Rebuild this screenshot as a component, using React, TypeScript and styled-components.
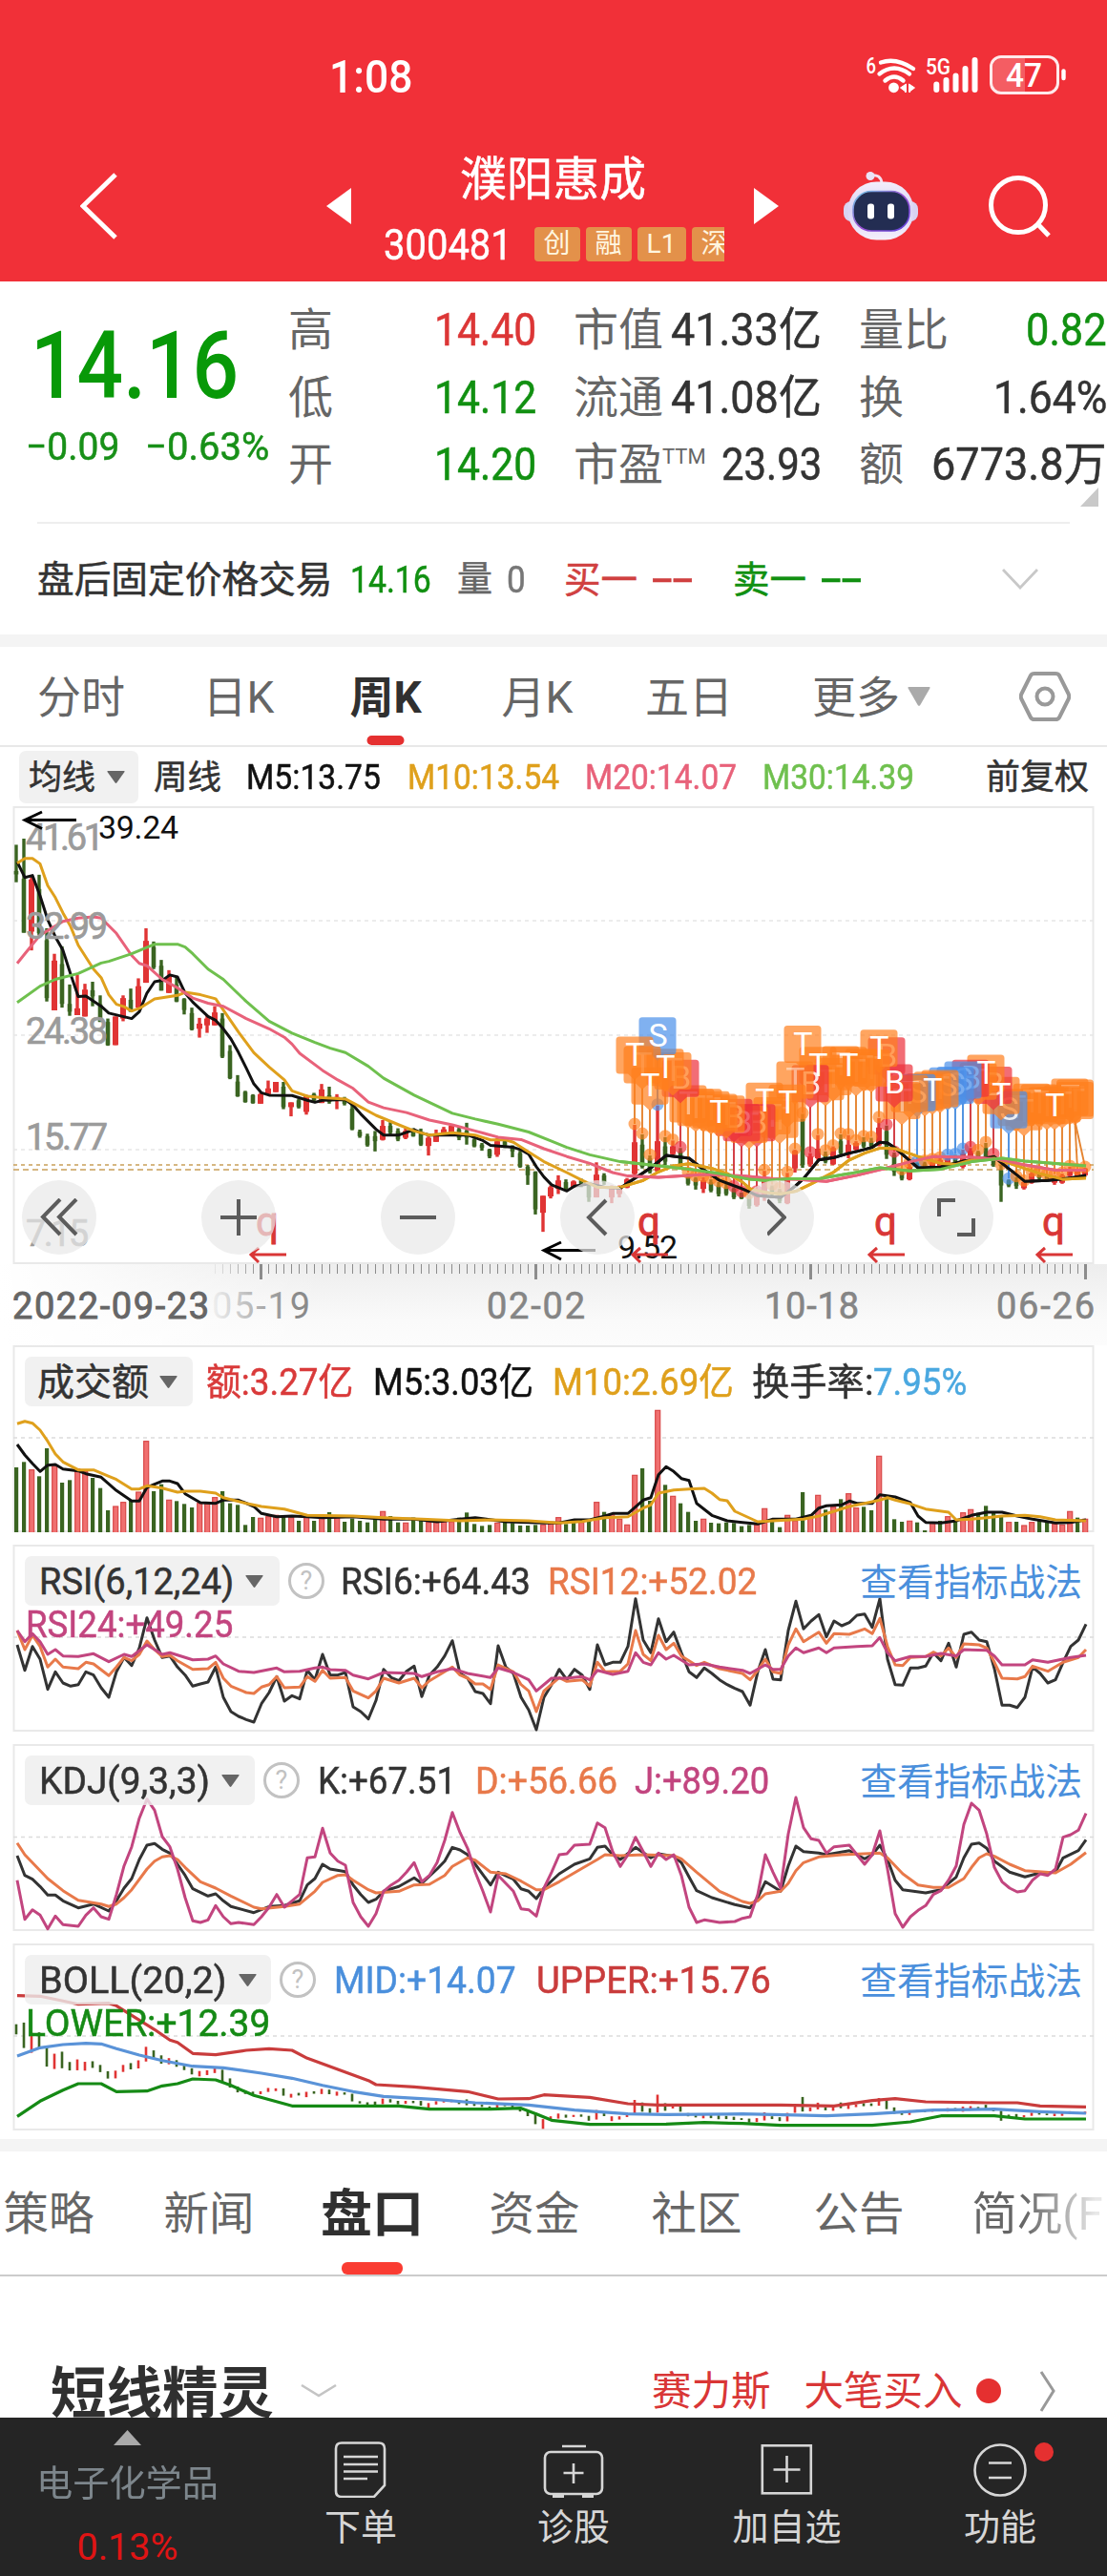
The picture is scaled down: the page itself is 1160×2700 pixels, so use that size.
import { useLayoutEffect, useRef } from "react";
import type { ReactNode } from "react";
import styled, { createGlobalStyle, css } from "styled-components";

const FONT = `Roboto, "Noto Sans CJK SC", sans-serif`;

const GlobalStyle = createGlobalStyle`
  * { box-sizing: border-box; }
  body {
    margin: 0;
    background: #fff;
    font-family: ${FONT};
  }
  svg { display: block; flex: none; }
`;

/* ---------- text ---------- */

const FitBox = styled.span<{ w: number; size: number; gap?: number; color?: string; weight?: number; shift?: number }>`
  display: block;
  flex: none;
  width: ${(p) => p.w}px;
  margin-left: ${(p) => p.gap || 0}px;
  padding-top: ${(p) => p.shift || 0}px;
  font-size: ${(p) => p.size}px;
  line-height: 1.1;
  font-weight: ${(p) => p.weight || 400};
  color: ${(p) => p.color || "#333"};
  -webkit-text-stroke: ${(p) => (p.weight ? 0 : 0.5)}px currentColor;
  white-space: nowrap;
`;

const FitInner = styled.span`
  display: inline-block;
  transform-origin: 0 50%;
  white-space: pre;
`;

type FitProps = {
  w: number;
  size: number;
  gap?: number;
  color?: string;
  weight?: number;
  shift?: number;
  children: ReactNode;
};

// squeezes a label to the given width, the quote digits are narrower than the system ones
const Fit = ({ children, ...rest }: FitProps) => {
  const ref = useRef<HTMLSpanElement>(null);

  useLayoutEffect(() => {
    const el = ref.current;
    if (!el || !el.offsetWidth) return;
    el.style.transform = `scaleX(${rest.w / el.offsetWidth})`;
  }, [rest.w, children]);

  return (
    <FitBox {...rest}>
      <FitInner ref={ref}>{children}</FitInner>
    </FitBox>
  );
};

/* ---------- layout ---------- */

const Page = styled.div`
  width: 1160px;
  height: 2700px;
  overflow: hidden;
  display: flex;
  flex-direction: column;
  background: #fff;
`;

const Header = styled.header`
  height: 295px;
  flex: none;
  background: #f13038;
`;

const StatusBar = styled.div`
  height: 158px;
  display: flex;
  align-items: center;
  padding-left: 345px;
`;

const NavBar = styled.div`
  height: 116px;
  display: flex;
  align-items: center;
  padding-left: 84px;
`;

const Icon = styled.svg<{ gap?: number }>`
  margin-left: ${(p) => p.gap || 0}px;
`;

const TitleBlock = styled.div`
  width: 422px;
  height: 116px;
  display: flex;
  flex-direction: column;
  align-items: center;
  justify-content: space-between;
`;

const CodeRow = styled.div`
  width: 357px;
  height: 36px;
  margin-left: 2px;
  overflow: hidden;
  display: flex;
  align-items: center;
`;

const Tag = styled.span<{ w: number; gap?: number }>`
  flex: none;
  width: ${(p) => p.w}px;
  height: 36px;
  margin-left: ${(p) => p.gap ?? 6}px;
  border-radius: 4px;
  background: #e3914a;
  color: #fff6e0;
  font-size: 28px;
  line-height: 35px;
  text-align: center;
`;

const Quote = styled.section`
  position: relative;
  height: 252px;
  flex: none;
  display: flex;
  padding-top: 16px;
`;

const PriceBlock = styled.div`
  width: 302px;
  padding: 19px 0 0 27px;
`;

const Changes = styled.div`
  display: flex;
  margin-top: 8px;
`;

const QuoteCol = styled.div<{ w: number; gap?: number }>`
  width: ${(p) => p.w}px;
  margin-left: ${(p) => p.gap || 0}px;
`;

const QuoteRow = styled.div`
  height: 70.5px;
  display: flex;
  align-items: center;
  justify-content: space-between;
`;

const Label = styled.span`
  display: flex;
  color: #666;
  font-size: 47px;
  line-height: 1.1;
`;

const Ttm = styled.sup`
  font-size: 22px;
  line-height: 1;
  margin: 7px 0 0 -1px;
  vertical-align: top;
`;

const Corner = styled.svg`
  position: absolute;
  right: 9px;
  bottom: 16px;
`;

const AfterRow = styled.section`
  height: 118px;
  flex: none;
  margin: 0 39px;
  border-top: 2px solid #eee;
  display: flex;
  align-items: center;
`;

const Band = styled.div`
  height: 13px;
  flex: none;
  background: #f4f4f4;
`;

const PeriodTabs = styled.nav`
  height: 105px;
  flex: none;
  display: flex;
  align-items: center;
  border-bottom: 2px solid #e8e8e8;
`;

const Tab = styled.span<{ w: number; gap: number; size?: number; active?: boolean; barColor?: string }>`
  position: relative;
  flex: none;
  width: ${(p) => p.w}px;
  height: 100%;
  margin-left: ${(p) => p.gap}px;
  padding-bottom: 6px;
  display: flex;
  align-items: center;
  justify-content: center;
  font-size: ${(p) => p.size || 46}px;
  color: #666;
  white-space: nowrap;

  ${(p) =>
    p.active &&
    css`
      color: #303030;
      font-weight: 700;

      &::after {
        content: "";
        position: absolute;
        bottom: 0;
        left: 50%;
        width: ${p.size ? 64 : 39}px;
        height: ${p.size ? 13 : 10}px;
        border-radius: 6px;
        transform: translateX(-50%);
        background: ${p.barColor || "#e53030"};
      }
    `}
`;

const MaLegend = styled.div`
  height: 62px;
  flex: none;
  display: flex;
  align-items: center;
  padding-left: 20px;
`;

const Chip = styled.div<{ w: number; h?: number; pad: number }>`
  flex: none;
  width: ${(p) => p.w}px;
  height: ${(p) => p.h || 52}px;
  padding-left: ${(p) => p.pad}px;
  border-radius: 7px;
  background: rgba(238, 238, 238, 0.8);
  display: flex;
  align-items: center;
`;

const Panel = styled.section<{ h: number; mb?: number }>`
  height: ${(p) => p.h}px;
  margin-bottom: ${(p) => p.mb || 0}px;
  flex: none;
  display: grid;
  grid-template: ${(p) => p.h}px / 1160px;

  > * {
    grid-area: 1 / 1;
  }
`;

const LegendBlock = styled.div`
  padding: 12px 26px 0 26px;
`;

const LegendRow = styled.div`
  height: 52px;
  display: flex;
  align-items: center;
`;

const TacticLink = styled.a`
  margin-left: auto;
  padding-top: 5px;
  font-size: 38.8px;
  line-height: 1;
  color: #4a8fdc;
`;

const Help = styled.span`
  flex: none;
  width: 38px;
  height: 38px;
  margin-left: 9px;
  border: 3px solid #c2c2c2;
  border-radius: 50%;
  color: #c2c2c2;
  font-size: 27px;
  line-height: 33px;
  text-align: center;
`;

const Controls = styled.div`
  align-self: end;
  height: 88px;
  display: flex;
  gap: 110px;
  padding-left: 23px;
`;

const RoundButton = styled.button`
  width: 78px;
  height: 78px;
  padding: 0;
  border: none;
  border-radius: 50%;
  background: rgba(233, 233, 233, 0.72);
  display: flex;
  align-items: center;
  justify-content: center;
`;

const DateAxis = styled.div`
  height: 85px;
  flex: none;
  background: linear-gradient(90deg, #fff 0, transparent 340px), linear-gradient(#ededed, #fafafa 70%, #fcfcfc);
`;

const InfoTabs = styled.nav`
  height: 131px;
  flex: none;
  display: flex;
  align-items: stretch;
  overflow: hidden;
  border-bottom: 2px solid #ccc;
`;

const FadeText = styled.span`
  background: linear-gradient(90deg, #666 55px, #e8e8e8 130px);
  background-clip: text;
  color: transparent;
`;

const Feed = styled.section`
  height: 148px;
  flex: none;
  display: flex;
  padding: 91px 0 0 53px;
  overflow: hidden;
`;

const FeedTitle = styled.h2`
  margin: 0;
  height: 57px;
  font-size: 58.5px;
  line-height: 64px;
  font-weight: 700;
  color: #303030;
  width: 234px;
`;

const FeedText = styled.span<{ gap: number }>`
  margin-left: ${(p) => p.gap}px;
  font-size: 41.5px;
  line-height: 60px;
  color: #d93636;
`;

const Dot = styled.i<{ size: number; gap: number; top: number }>`
  width: ${(p) => p.size}px;
  height: ${(p) => p.size}px;
  margin: ${(p) => p.top}px 0 0 ${(p) => p.gap}px;
  border-radius: 50%;
  background: #e53030;
`;

const BottomBar = styled.footer`
  height: 166px;
  flex: none;
  background: #252525;
  display: flex;
`;

const Sector = styled.div`
  width: 267px;
  padding-top: 13px;
  display: flex;
  flex-direction: column;
  align-items: center;
`;

const BarItem = styled.div<{ w: number }>`
  position: relative;
  width: ${(p) => p.w}px;
  padding-top: 22px;
  display: flex;
  flex-direction: column;
  align-items: center;
  gap: 6px;
  font-size: 38px;
  line-height: 50px;
  color: #d6d6d6;
`;

const Badge = styled.i`
  position: absolute;
  top: 26px;
  right: 56px;
  width: 20px;
  height: 20px;
  border-radius: 50%;
  background: #e53030;
`;

/* ---------- chart data ---------- */

// one entry per week: colour, high, open/close band, low
const CANDLES =
  "G130,207,217,240 G112,230,388,388 R222,232,385,440 G218,260,390,395 G375,410,580,590 R450,470,616,616 G428,480,597,608 " +
  "G540,597,620,632 R512,610,630,630 R538,555,634,634 G532,557,575,604 G572,598,650,650 G640,650,718,720 R634,634,718,718 " +
  "R572,580,640,648 G552,585,620,620 R522,545,608,610 R375,412,535,535 G414,430,490,495 G468,485,558,558 R498,515,565,565 " +
  "G520,540,590,592 G580,583,615,628 G608,624,672,675 R638,655,670,696 R630,640,660,682 R604,622,660,660 G624,640,752,756 " +
  "G718,735,815,818 G806,825,868,870 G852,855,885,887 G862,865,888,890 R858,862,890,890 R822,845,862,865 R826,826,856,856 " +
  "G826,840,900,906 R886,886,900,927 G875,880,900,904 R864,865,914,922 G858,862,880,885 R832,848,888,888 G840,865,885,890 " +
  "R862,870,880,906 G870,875,890,895 G885,905,965,968 G966,972,985,990 G978,985,1012,1016 G970,985,1000,1030 R938,955,996,998 " +
  "G944,955,975,980 G962,970,995,1000 R962,970,990,994 G962,965,985,987 G963,975,1010,1014 R986,990,1014,1042 R966,980,1002,1002 " +
  "R958,965,978,980 R950,955,974,976 G958,965,990,997 G946,970,990,1010 G992,995,1015,1018 G1005,1010,1020,1028 G1022,1025,1045,1050 " +
  "R990,1000,1040,1046 G994,1000,1018,1020 G1012,1015,1030,1047 G1028,1035,1075,1078 G1070,1075,1100,1128 G1088,1090,1200,1215 " +
  "R1160,1160,1210,1266 R1130,1135,1162,1168 R1100,1115,1140,1155 G1112,1120,1140,1145 R1115,1118,1135,1137 G1110,1115,1130,1135 " +
  "G1125,1130,1165,1178 R1062,1098,1165,1165 G1094,1100,1120,1128 R1130,1135,1165,1182 R1130,1135,1155,1165 R1108,1112,1136,1138 " +
  "R952,1003,1096,1100 G980,1010,1075,1080 G1042,1050,1090,1095 R895,1000,1088,1090 G988,1015,1060,1070 R998,1015,1038,1045 " +
  "G1020,1030,1075,1080 G1095,1100,1125,1130 G1105,1110,1130,1142 R1105,1115,1140,1152 G1112,1120,1145,1150 G1120,1130,1155,1162 " +
  "G1125,1135,1155,1160 G1135,1140,1165,1170 G1150,1152,1168,1170 G1155,1160,1190,1198 R1150,1155,1188,1192 R1087,1110,1160,1175 " +
  "G1130,1135,1155,1160 G1140,1145,1175,1182 R1093,1110,1182,1185 R1025,1028,1080,1092 G920,935,1070,1078 R1035,1045,1068,1075 " +
  "R982,1022,1050,1055 G1030,1038,1060,1065 R1015,1020,1068,1070 G980,1000,1035,1042 R982,1010,1040,1050 R1000,1005,1025,1030 " +
  "G988,1000,1015,1020 G990,1000,1015,1018 R932,960,1012,1015 G954,970,1040,1052 G1033,1040,1090,1102 G1085,1090,1110,1115 " +
  "R1065,1075,1112,1115 G1062,1065,1075,1078 G1060,1065,1078,1085 R1055,1060,1078,1080 R1050,1055,1072,1075 R1042,1050,1075,1078 " +
  "G1040,1045,1070,1075 R1025,1035,1075,1080 R1020,1028,1050,1055 G1028,1032,1050,1055 G1005,1020,1050,1055 G1040,1048,1070,1075 " +
  "G1070,1085,1130,1178 G1112,1115,1130,1135 G1105,1115,1132,1140 R1118,1120,1138,1142 R1090,1095,1122,1125 G1092,1095,1108,1112 " +
  "G1100,1102,1115,1118 R1100,1105,1122,1128 R1095,1100,1122,1125 R1075,1085,1102,1105 R1085,1088,1102,1105 R1078,1080,1100,1102";

const VOLUMES =
  "417G 400G 425R 445G 357G 410R 465G 457G 422R 430R 450G 482G 552G 540R 527R 520G 495R 335R 492G 470G 520R 523G 532G 543G 530R 528R 512R " +
  "492G 530G 535G 598G 573G 577R 572R 568R 572G 575R 585G 572R 585G 572R 558G 575R 588G 578G 585G 590G 575G 556R 570G 590G 592R 575G 585G " +
  "590R 585R 588R 588R 575G 559G 595G 601G 598G 592R 585G 592G 600G 600G 598G 598R 590R 575R 595G 585G 590R 580G 527R 557G 565R 580R 598R " +
  "442R 420G 522G 238R 472G 508R 530G 557G 585G 580R 591G 593G 590G 592G 602G 598G 598R 547R 585G 605G 568R 585R 495G 570R 505R 550G 542R " +
  "517G 500R 545R 541G 552G 382R 505G 580G 588G 586R 590G 615G 590R 585G 572R 585G 560R 550R 560G 538G 558G 572G 590R 588G 600R 590R 585G " +
  "590G 595R 598R 556R 575G 580R";

type Line = [string, string];

const PRICE_LINES: Line[] = [
  ["#111", "0:180 1:226 2:220 3:280 4:350 5:400 6:440 7:510 8:575 9:574 11:604 12:624 15:640 16:620 17:565 18:532 19:528 20:512 21:518 22:565 23:592 25:634 26:645 27:670 28:700 29:740 30:785 31:832 32:858 33:865 36:866 38:880 39:886 40:880 43:878 44:895 45:920 47:965 48:982 50:982 52:966 53:976 54:982 57:982 59:982 61:998 62:1012 65:1018 66:1025 67:1038 68:1075 69:1105 70:1128 72:1146 73:1132 75:1125 77:1135 79:1138 80:1122 83:1078 85:1042 88:1050 90:1085 92:1115 95:1140 96:1150 97:1160 100:1165 102:1130 103:1110 105:1055 107:1048 109:1035 110:1030 112:1018 113:1003 114:1005 115:1020 118:1078 121:1076 124:1058 128:1046 129:1065 131:1100 132:1118 135:1115 138:1108 140:1100"],
  ["#dfa01c", "0:184 1:170 2:170 3:186 4:250 5:285 6:330 7:370 8:425 10:495 11:520 12:570 13:598 14:605 15:618 16:610 18:582 21:572 22:563 24:570 26:582 27:615 29:680 31:740 33:782 35:820 36:852 38:868 40:872 43:876 45:900 47:924 50:952 52:970 54:982 57:975 60:982 62:996 64:996 65:1003 67:1032 69:1060 72:1092 74:1115 76:1135 79:1135 82:1115 84:1090 86:1072 88:1066 91:1080 93:1095 95:1120 96:1140 98:1150 100:1155 102:1147 104:1125 107:1090 109:1055 111:1035 113:1020 115:1022 118:1045 121:1065 123:1068 125:1055 128:1050 130:1065 134:1095 137:1112 140:1108"],
  ["#e8627a", "0:478 1:450 3:395 6:355 8:345 10:342 11:345 13:390 15:455 16:478 17:485 19:525 21:550 23:580 25:595 27:604 30:640 33:670 35:695 36:715 37:742 40:792 42:820 44:845 46:885 48:902 51:916 54:938 57:952 60:970 63:988 66:995 69:1022 72:1045 75:1065 78:1092 80:1102 84:1106 90:1098 95:1102 99:1110 102:1112 106:1118 110:1100 114:1078 117:1060 120:1045 126:1048 129:1055 132:1070 136:1085 140:1085"],
  ["#6fc04e", "0:593 3:545 5:525 8:508 11:477 12:472 15:450 18:422 21:422 22:430 23:450 25:495 27:525 30:590 33:648 36:683 39:710 41:727 43:740 46:780 48:815 52:865 57:918 60:935 63:950 67:973 70:1000 72:1018 75:1040 79:1060 83:1070 88:1082 92:1095 96:1112 98:1115 101:1110 105:1110 109:1095 113:1078 117:1087 121:1082 125:1060 129:1050 132:1058 136:1065 140:1072"],
];

const VOLUME_LINES: Line[] = [
  ["#111", "0:345 1:378 2:405 3:430 4:410 5:408 6:422 8:428 9:437 11:448 13:490 15:523 16:523 17:480 18:470 19:460 20:460 21:468 22:500 24:528 26:530 27:520 29:520 31:540 32:562 34:572 36:570 38:572 40:575 44:572 48:580 52:580 55:588 58:580 60:575 64:588 69:592 71:592 73:582 75:582 77:570 78:562 80:562 82:520 83:512 84:440 85:415 86:430 87:452 88:458 89:530 91:568 93:585 95:590 97:595 99:580 102:580 104:568 105:545 106:538 108:535 109:523 110:530 112:530 113:503 115:510 117:528 118:570 119:590 121:592 123:585 125:568 127:558 129:558 131:570 133:580 136:592 138:590 140:582"],
  ["#dfa01c", "0:280 1:272 2:278 3:300 4:335 5:375 6:400 8:425 10:425 12:445 13:455 15:485 16:485 17:475 19:482 21:495 22:492 24:492 26:498 27:512 30:530 32:540 35:548 38:568 44:570 48:575 53:580 58:585 62:582 67:585 71:592 74:587 77:575 80:572 82:545 83:535 84:498 86:488 88:485 90:483 91:498 92:518 93:522 94:555 97:588 99:585 103:580 105:570 107:555 109:540 111:530 113:520 114:512 115:520 117:532 119:548 122:558 123:582 125:580 127:575 129:570 132:568 134:572 136:582 140:585"],
];

const RSI_LINES: Line[] = [
  ["#333", "0:975 1:1055 2:980 3:1020 4:1115 5:1060 6:1095 7:1105 8:1100 9:1060 10:1070 11:1110 12:1140 13:1060 14:1015 15:1040 16:985 17:890 18:960 19:1015 20:1010 21:1045 22:1070 23:1105 24:1098 25:1092 26:1045 27:1140 28:1185 29:1200 30:1210 31:1218 32:1160 33:1125 34:1075 35:1152 36:1135 37:1145 38:1055 39:1085 40:1005 41:1070 42:1070 43:1062 44:1170 45:1185 46:1208 47:1150 48:1052 49:1078 50:1088 51:1058 52:1042 53:1138 54:1070 55:1045 56:1010 57:962 58:1065 59:1080 60:1122 61:1128 62:1160 63:978 64:1045 65:1065 66:1140 67:1180 68:1242 69:1140 70:1100 71:1052 72:1085 73:1052 74:1070 75:1115 76:975 77:1038 78:1030 79:1030 80:980 81:830 82:960 83:1000 84:893 85:965 86:935 87:1000 88:1060 89:1078 90:1048 91:1065 92:1085 93:1100 94:1112 95:1122 96:1165 97:1060 98:990 99:1083 100:1085 101:930 102:838 103:925 104:900 105:880 106:950 107:900 108:915 109:905 110:882 111:878 112:920 113:830 114:1020 115:1100 116:1102 117:1048 118:1048 119:1042 120:1000 121:1025 122:970 123:1045 124:942 125:935 126:960 127:965 128:1050 129:1165 130:1165 131:1172 132:1140 133:1045 134:1065 135:1095 136:1085 137:1030 138:980 139:960 140:910"],
  ["#e8794a", "0:930 1:990 2:945 3:980 4:1045 5:1020 6:1045 8:1050 9:1030 10:1035 12:1072 13:1045 14:1015 15:1025 16:1005 17:963 18:990 19:1012 20:1008 21:1025 23:1052 25:1050 26:1030 27:1080 28:1105 30:1125 31:1128 32:1108 33:1100 34:1075 35:1110 37:1108 38:1075 39:1090 40:1055 41:1080 43:1078 44:1120 46:1142 47:1120 48:1080 50:1095 52:1080 53:1110 54:1088 57:1045 58:1070 59:1080 60:1098 61:1098 62:1115 63:1038 65:1060 66:1100 67:1120 68:1185 69:1120 71:1078 72:1090 74:1085 75:1105 76:1030 77:1060 79:1058 80:1035 81:930 82:1005 83:1025 84:945 85:990 86:970 87:1010 89:1040 90:1030 92:1050 95:1065 96:1085 97:1055 98:1020 99:1060 100:1065 101:975 102:925 103:965 105:935 106:970 107:940 109:942 111:925 112:940 113:892 114:980 115:1038 116:1040 117:1015 119:1012 120:998 121:1010 122:985 123:1015 124:972 126:975 127:985 128:1030 129:1080 131:1082 132:1075 133:1042 135:1058 137:1030 139:1015 140:990"],
  ["#c2457f", "0:930 1:965 2:940 3:965 4:1005 5:990 6:1010 8:1012 10:1003 12:1028 14:1005 15:1012 17:975 19:1005 20:1000 23:1022 25:1020 26:1010 27:1035 29:1058 31:1062 34:1048 35:1060 37:1058 39:1048 40:1045 41:1053 43:1055 44:1070 46:1082 48:1062 52:1065 53:1075 55:1060 57:1050 59:1065 62:1078 63:1048 65:1062 67:1085 68:1120 70:1080 72:1080 74:1075 75:1085 76:1055 78:1068 80:1058 81:1000 82:1030 83:1038 84:1000 85:1020 86:1008 88:1038 90:1035 92:1045 95:1055 96:1065 98:1038 99:1052 100:1052 101:1010 102:985 103:1000 105:985 106:1000 107:985 110:980 112:978 113:952 114:1000 115:1025 117:1012 119:1012 121:1002 123:1010 124:990 127:992 128:1010 129:1038 132:1038 133:1022 135:1030 138:1015 140:1008"],
];

const KDJ_LINES: Line[] = [
  ["#333", "0:378 1:440 2:452 3:475 4:502 5:502 6:520 8:542 10:530 12:552 13:520 14:480 15:450 16:390 17:345 18:340 19:358 20:370 21:405 22:440 23:482 25:505 26:498 27:520 28:538 31:557 33:538 35:535 37:520 38:470 39:450 40:405 41:420 43:428 44:470 45:500 46:525 47:515 48:490 50:475 52:448 53:465 55:420 56:395 57:352 58:360 59:375 60:405 62:470 63:430 65:452 66:482 67:490 68:513 69:480 71:435 73:405 75:388 76:352 77:348 78:375 79:390 81:352 83:385 84:372 86:380 87:400 88:445 89:488 91:510 94:532 96:542 97:510 98:460 100:490 101:410 102:348 103:365 105:370 106:375 109:362 111:388 112:375 113:345 114:390 115:455 116:485 119:495 121:485 123:445 124:385 125:342 126:338 127:355 128:395 130:430 132:445 134:432 136:430 137:385 139:362 140:328"],
  ["#e8794a", "0:338 1:375 4:450 6:488 8:518 11:530 12:538 13:530 14:510 15:485 17:420 18:395 19:382 20:378 21:390 22:415 24:460 26:480 28:505 31:540 32:545 35:538 37:530 39:490 40:462 42:440 43:438 44:455 46:485 47:495 50:490 52:470 54:468 56:440 57:412 59:385 60:392 62:430 64:435 66:458 68:485 69:485 71:460 74:418 76:390 77:375 79:378 82:375 86:378 87:388 89:430 92:490 95:522 96:528 97:520 98:498 100:490 101:465 102:425 103:400 105:382 108:375 113:370 114:385 116:435 118:470 120:478 122:478 124:450 125:415 126:385 127:372 128:380 130:405 132:425 136:432 138:405 140:368"],
  ["#c2457f", "0:455 1:578 2:548 3:565 4:608 5:568 6:595 8:600 9:565 10:542 11:570 12:578 13:500 14:410 15:350 16:260 17:200 18:235 19:318 20:350 21:420 22:510 23:583 24:588 25:580 26:535 27:570 28:592 29:588 31:595 32:570 33:540 34:500 35:540 36:520 37:500 38:385 39:382 40:292 41:370 42:395 43:408 44:525 45:570 46:600 47:560 48:490 49:470 50:455 51:430 52:400 53:460 54:440 55:400 56:330 57:242 58:305 59:355 60:430 61:490 62:555 63:440 64:465 65:490 66:545 67:548 68:568 69:480 70:430 71:375 72:372 73:345 75:342 76:275 77:290 78:365 79:412 80:375 81:320 82:365 83:412 84:370 85:390 86:375 87:440 88:540 89:588 90:580 92:588 94:585 95:575 96:570 97:500 98:375 99:430 100:480 101:310 102:195 103:290 104:325 105:330 106:370 107:350 109:345 110:375 111:405 112:375 113:300 114:420 115:560 116:603 117:570 118:550 119:535 120:500 121:488 122:455 123:410 124:280 125:213 126:235 127:310 128:415 129:460 130:480 131:492 132:488 133:455 134:435 135:440 136:420 137:320 138:312 139:298 140:245"],
];

const BOLL_LINES: Line[] = [
  ["#c93c3c", "0:818 3:820 6:835 8:845 12:842 13:850 14:865 16:895 18:925 20:958 21:965 23:1000 26:1004 30:990 33:985 36:990 38:1015 42:1050 46:1085 47:1098 52:1105 59:1120 63:1143 67:1142 69:1130 75:1138 80:1158 84:1162 100:1162 107:1165 112:1148 115:1142 119:1152 127:1155 131:1155 134:1165 140:1168"],
  ["#5a93d8", "0:1008 3:982 6:972 9:968 11:970 13:985 16:1005 19:1022 23:1040 27:1045 32:1062 36:1078 40:1100 44:1120 48:1135 55:1145 60:1155 67:1162 73:1178 80:1190 85:1192 95:1190 106:1196 112:1190 120:1178 128:1175 134:1183 140:1188"],
  ["#158a15", "0:1198 3:1150 6:1115 8:1095 11:1095 13:1120 17:1118 19:1102 21:1095 23:1080 26:1083 28:1100 31:1132 36:1165 42:1165 50:1165 54:1175 62:1175 66:1172 68:1190 70:1210 75:1223 85:1222 90:1217 95:1220 100:1226 112:1226 117:1215 121:1196 128:1196 132:1206 140:1206"],
];

const candles = CANDLES.split(" ").map((c) => {
  const [high, top, bottom, low] = c.slice(1).split(",").map(Number);
  return { up: c[0] === "R", high, top, bottom, low };
});

const UP = "#e03434";
const DOWN = "#3a6421";

const xAt = (i: number) => 17 + i * 8;
const priceY = (v: number) => 840 + v / 2.8;
const bollY = (v: number) => 2133.3 + (v - 240) * 0.0965;

const toPoints = (series: string, y: (v: number) => number) =>
  series
    .split(" ")
    .map((p) => p.split(":").map(Number))
    .map(([i, v]) => `${xAt(i) + 1},${y(v).toFixed(1)}`)
    .join(" ");

const Lines = ({ lines, y, width = 3 }: { lines: Line[]; y: (v: number) => number; width?: number }) => (
  <>
    {lines.map(([color, series]) => (
      <polyline key={color} points={toPoints(series, y)} fill="none" stroke={color} strokeWidth={width} strokeLinejoin="round" />
    ))}
  </>
);

const Frame = ({ top, bottom }: { top: number; bottom: number }) => (
  <rect x="14.5" y={top} width="1131" height={bottom - top} fill="none" stroke="#e9e9e9" strokeWidth="2" />
);

const Grid = ({ y, color = "#e6e6e6", dash = "4 4" }: { y: number; color?: string; dash?: string }) => (
  <line x1="14" x2="1146" y1={y} y2={y} stroke={color} strokeWidth="1.6" strokeDasharray={dash} />
);

/* ---------- trade markers ---------- */

const SELLS = [84, 118, 122, 123, 124, 130];
const BUYS = [87, 94, 95, 97, 104, 114, 115, 125, 128];
const ON_TOP = [81, 83, 84, 85, 92, 98, 101, 103, 105, 109, 113, 115, 120, 127, 129, 136];

const markers = candles
  .map((c, i) => {
    const kind = SELLS.includes(i) ? "S" : BUYS.includes(i) ? "B" : "T";
    const y = priceY(c.high) - 1;
    return { i, kind, dotX: xAt(i), x: Math.min(xAt(i), 1126.5), y, top: y - 91.5 };
  })
  .slice(81);

const MARK_FILL: Record<string, string> = { T: "#ff7f1c", B: "#ec2f3b", S: "#4a90ea" };
const MARK_LINE: Record<string, string> = { T: "#e58430", B: "#d2383f", S: "#4a8fe0" };

const Glyph = ({ m, opacity }: { m: (typeof markers)[number]; opacity: number }) => (
  <text x={m.x + 0.5} y={m.top + 30.5} fontSize="34" fontFamily="Roboto" fill="#fff" opacity={opacity} textAnchor="middle">
    {m.kind}
  </text>
);

const Markers = () => (
  <g>
    {markers.map((m) => (
      <g key={m.i}>
        <line x1={m.x} y1={m.top + 44} x2={m.dotX} y2={m.y} stroke={MARK_LINE[m.kind]} strokeWidth="1.9" />
        <circle cx={m.dotX} cy={m.y} r="6.5" fill={MARK_FILL[m.kind]} opacity="0.65" />
      </g>
    ))}
    {[...markers].reverse().map((m) => (
      <g key={m.i}>
        <path
          d={`M${m.x - 16} ${m.top}h32q3.5 0 3.5 3.5v32q0 3.5-3.5 3.5h-9l-7 6.5-7-6.5h-9q-3.5 0-3.5-3.5v-32q0-3.5 3.5-3.5z`}
          fill={MARK_FILL[m.kind]}
          opacity="0.7"
        />
        {!ON_TOP.includes(m.i) && <Glyph m={m} opacity={m.kind === "T" ? 0.45 : 0.85} />}
      </g>
    ))}
    {markers.filter((m) => ON_TOP.includes(m.i)).map((m) => (
      <Glyph key={m.i} m={m} opacity={1} />
    ))}
  </g>
);

/* ---------- charts ---------- */

const axisText = { fontFamily: "Roboto", lengthAdjust: "spacingAndGlyphs" as const };

const PriceChart = () => (
  <svg width="1160" height="480" viewBox="0 846 1160 480">
    <Frame top={847} bottom={1325} />
    {[966, 1086, 1206].map((y) => (
      <Grid key={y} y={y} />
    ))}
    <Grid y={1222} color="#c9a05a" />
    <Grid y={1227} color="#c9a05a" dash="6 4" />
    {candles.map((c, i) => {
      const body = c.up ? 6 : 4.6;
      return (
        <g key={i} fill={c.up ? UP : DOWN}>
          <rect x={xAt(i) - 1.7} y={priceY(c.high)} width="3.4" height={(c.low - c.high) / 2.8} />
          <rect x={xAt(i) - body / 2} y={priceY(c.top)} width={body} height={(c.bottom - c.top) / 2.8} />
        </g>
      );
    })}
    <Lines lines={PRICE_LINES} y={priceY} />
    <g fill="#9b9b9b" stroke="#9b9b9b" strokeWidth="0.7" fontSize="38" {...axisText}>
      <text x="27" y="892" textLength="82">41.61</text>
      <text x="27" y="985" textLength="86">32.99</text>
      <text x="27" y="1095" textLength="86">24.38</text>
      <text x="27" y="1206" textLength="86">15.77</text>
      <text x="27" y="1307" textLength="66">7.15</text>
    </g>
    <g fill="#111" fontSize="34" {...axisText}>
      <text x="103" y="880" textLength="84">39.24</text>
      <text x="647" y="1320" textLength="63">9.52</text>
    </g>
    <g fill="none" stroke="#000" strokeWidth="3">
      <path d="M80 860.5H26M44 852L26 860.5l18 9" />
      <path d="M624 1311.5h-53M588 1303l-18 8.5 18 9.5" />
    </g>
    <Markers />
    <Lines lines={PRICE_LINES.map(([c, s]) => [c, s.split(" ").filter((p) => parseInt(p, 10) > 78).join(" ")])} y={priceY} />
    {[0, 400, 648, 824].map((dx) => (
      <g key={dx} fill="none" stroke="#d93636">
        <path strokeWidth="3" d={`M${300 + dx} 1316h-37m8-7l-8 7 8 8`} />
        <text x={268 + dx} y="1296" fontSize="42" fill="#d93636" strokeWidth="0.8" fontFamily="Roboto">
          q
        </text>
      </g>
    ))}
  </svg>
);

const DATES: [string, number, number][] = [
  ["02-02", 510, 103],
  ["10-18", 801, 99],
  ["06-26", 1044, 103],
];

const DateTicks = () => (
  <svg width="1160" height="85" viewBox="0 1326 1160 85">
    <defs>
      <linearGradient id="fade" x1="224" x2="310" y1="0" y2="0" gradientUnits="userSpaceOnUse">
        <stop offset="0" stopColor="#8a8a8a" stopOpacity="0.1" />
        <stop offset="0.6" stopColor="#8a8a8a" stopOpacity="0.7" />
        <stop offset="1" stopColor="#8a8a8a" />
      </linearGradient>
    </defs>
    {candles.map((_, i) => {
      if (i < 26) return null;
      const major = i % 36 === 32;
      return (
        <line
          key={i}
          x1={xAt(i) + 0.5}
          x2={xAt(i) + 0.5}
          y1="1326"
          y2={major ? 1342 : 1336}
          stroke="#8c8c8c"
          strokeWidth={major ? 3 : 1}
          opacity={Math.min(1, (i - 25) / 7)}
        />
      );
    })}
    <g fontSize="38" {...axisText}>
      <text x="13" y="1383" textLength="206" fill="#666" stroke="#666" strokeWidth="0.9">2022-09-23</text>
      <text x="222" y="1383" textLength="103" fill="url(#fade)">05-19</text>
      {DATES.map(([label, x, w]) => (
        <text key={label} x={x} y="1383" textLength={w} fill="#858585" stroke="#858585" strokeWidth="0.6">
          {label}
        </text>
      ))}
    </g>
  </svg>
);

const thirds = (offset: number) => (v: number) => offset + v / 3;

const VolumeChart = () => (
  <svg width="1160" height="196" viewBox="0 1411 1160 196">
    <Frame top={1412} bottom={1606} />
    <Grid y={1508} color="#dcdcdc" />
    {VOLUMES.split(" ").map((v, i) => {
      const y = 1400 + parseInt(v, 10) / 3;
      return v.endsWith("R") ? (
        <rect key={i} x={xAt(i) - 2.3} y={y} width="5" height={1608 - y} fill="#f07070" stroke="#d94848" strokeWidth="1.2" />
      ) : (
        <rect key={i} x={xAt(i) - 2} y={y} width="4.2" height={1608 - y} fill={DOWN} />
      );
    })}
    <Lines lines={VOLUME_LINES} y={thirds(1400)} />
  </svg>
);

const IndicatorChart = ({ lines, top, offset, grid }: { lines: Line[]; top: number; offset: number; grid: number }) => (
  <svg width="1160" height="196" viewBox={`0 ${top} 1160 196`}>
    <Frame top={top + 1} bottom={top + 195} />
    <Grid y={grid} color="#dcdcdc" />
    <Lines lines={lines} y={thirds(offset)} width={3} />
  </svg>
);

const BollChart = () => (
  <svg width="1160" height="196" viewBox="0 2038 1160 196">
    <Frame top={2039} bottom={2233} />
    <Grid y={2135} color="#dcdcdc" />
    {candles.map((c, i) => (
      <rect key={i} x={xAt(i) - 1.3} y={bollY(c.high)} width="2.6" height={(c.low - c.high) * 0.0965} fill={c.up ? UP : DOWN} />
    ))}
    <Lines lines={BOLL_LINES} y={thirds(1820)} width={3.2} />
  </svg>
);

/* ---------- icons ---------- */

const Caret = ({ gap, color = "#666", w = 19, h = 13 }: { gap: number; color?: string; w?: number; h?: number }) => (
  <Icon gap={gap} width={w} height={h} viewBox="0 0 19 13" preserveAspectRatio="none">
    <path d="M1 0h17q1 0 .5 1l-8 11.3q-1 1.2-2 0L.5 1Q0 0 1 0z" fill={color} />
  </Icon>
);

const StatusIcons = () => (
  <Icon gap={474} width="220" height="50" viewBox="905 54 220 50">
    <g fill="none" stroke="#fff" strokeWidth="4.4" strokeLinecap="round">
      <path d="M922 65.5q16-5.5 34 6.5" />
      <path d="M920.5 77.5q15.5-12 31.5 0" />
      <path d="M926.5 84.5q9.5-8 19 0" />
    </g>
    <circle cx="935.5" cy="91.8" r="5.4" fill="#fff" />
    <path d="M948.5 88v8.5l-6-4.500zM951.5 88v8.5l6-4.5zM947.5 88v9M952.5 88v9" fill="#fff" stroke="#fff" />
    <g fill="#fff" fontFamily="Roboto" fontWeight="500">
      <text x="906.5" y="76.5" fontSize="23" textLength="10.5" lengthAdjust="spacingAndGlyphs">6</text>
      <text x="969" y="77.5" fontSize="24" textLength="26" lengthAdjust="spacingAndGlyphs">5G</text>
    </g>
    <g stroke="#fff" strokeWidth="6" strokeLinecap="round">
      <path d="M980.3 88.5v5.5M990.5 84v10M1000.5 79.5v14.5M1010.5 72v22M1020.5 63v31" />
    </g>
    <path d="M1073 61h-22q-12 0-12 12v13q0 11 12 11h22z" fill="#fff" opacity="0.22" />
    <rect x="1037.5" y="59.5" width="70" height="38" rx="10.5" fill="none" stroke="#fff" strokeOpacity="0.9" strokeWidth="3" />
    <path d="M1113.5 74.5v7.5" stroke="#fff" strokeWidth="4.4" strokeLinecap="round" />
    <text x="1053" y="91" fontSize="35" fontWeight="500" fill="#fff" fontFamily="Roboto" textLength="38" lengthAdjust="spacingAndGlyphs">
      47
    </text>
  </Icon>
);

const Robot = () => (
  <Icon gap={67} width="80" height="74" viewBox="883 177 80 74">
    <defs>
      <linearGradient id="shell" x1="0" y1="0" x2="0" y2="1">
        <stop offset="0" stopColor="#f3edfb" />
        <stop offset="0.5" stopColor="#d9d4f4" />
        <stop offset="1" stopColor="#f5effc" />
      </linearGradient>
      <linearGradient id="rim" x1="0" y1="0" x2="1" y2="1">
        <stop offset="0" stopColor="#6fd0e8" />
        <stop offset="0.5" stopColor="#9a4fd0" />
        <stop offset="1" stopColor="#5a3fd8" />
      </linearGradient>
    </defs>
    <path d="M912 182q11-2 12 8" fill="none" stroke="#f5dfee" strokeWidth="3" />
    <circle cx="912" cy="182.5" r="4.5" fill="#eae2f6" />
    <rect x="884" y="209" width="78" height="21" rx="8" fill="#d8d3f2" />
    <rect x="888.5" y="188.5" width="69" height="61" rx="30" fill="url(#shell)" />
    <rect x="894" y="198.5" width="59" height="41.5" rx="19" fill="#232d52" stroke="url(#rim)" strokeWidth="1.6" />
    <rect x="909" y="211.5" width="7" height="16" rx="3" fill="#fff" />
    <rect x="930" y="211.5" width="7" height="16" rx="3" fill="#fff" />
  </Icon>
);

const barIcon = { width: 70, height: 62, fill: "none", stroke: "#d6d6d6", strokeWidth: 2.6 };

/* ---------- page ---------- */

const Indicator = ({
  name,
  nameW,
  chipW,
  values,
  extra,
  chart,
  last,
}: {
  name: string;
  nameW: number;
  chipW: number;
  values: [string, number, number, string][];
  extra?: [string, number, string];
  chart: ReactNode;
  last?: boolean;
}) => (
  <Panel h={196} mb={last ? 9 : 13}>
    {chart}
    <LegendBlock>
      <LegendRow>
        <Chip w={chipW} pad={15}>
          <Fit w={nameW} size={38} shift={4}>{name}</Fit>
          <Caret gap={12} />
        </Chip>
        <Help>?</Help>
        {values.map(([text, gap, w, color]) => (
          <Fit key={text} gap={gap} w={w} size={38} shift={4} color={color}>{text}</Fit>
        ))}
        <TacticLink>查看指标战法</TacticLink>
      </LegendRow>
      {extra && <Fit gap={1} shift={-1} w={extra[1]} size={38} color={extra[2]}><Raised>{extra[0]}</Raised></Fit>}
    </LegendBlock>
  </Panel>
);

const Raised = styled.span`
  display: block;
  margin-top: -3px;
`;

const App = () => (
  <Page>
    <GlobalStyle />

    <Header>
      <StatusBar>
        <Fit w={87} size={49} color="#fff" weight={500} shift={3}>1:08</Fit>
        <StatusIcons />
      </StatusBar>
      <NavBar>
        <Icon width="40" height="70" viewBox="0 0 40 70">
          <path d="M37 2L3 35l34 33" fill="none" stroke="#fff" strokeWidth="5" />
        </Icon>
        <Icon gap={218} width="26" height="38" viewBox="0 0 26 38">
          <path d="M26 0v38L0 19z" fill="#fff" />
        </Icon>
        <TitleBlock>
          <Fit w={195} size={48.5} color="#fff" shift={4}>濮阳惠成</Fit>
          <CodeRow>
            <Fit w={135} size={45} color="#fff" shift={1}>300481</Fit>
            <Tag w={48} gap={23}>创</Tag>
            <Tag w={48}>融</Tag>
            <Tag w={51}>L1</Tag>
            <Tag w={48}>深</Tag>
          </CodeRow>
        </TitleBlock>
        <Icon width="26" height="38" viewBox="0 0 26 38">
          <path d="M0 0v38l26-19z" fill="#fff" />
        </Icon>
        <Robot />
        <Icon gap={72} width="68" height="66" viewBox="1035 183 68 66">
          <circle cx="1067" cy="215" r="28.5" fill="none" stroke="#fff" strokeWidth="5" />
          <path d="M1087.5 235l11.5 12" stroke="#fff" strokeWidth="5" />
        </Icon>
      </NavBar>
    </Header>

    <Quote>
      <PriceBlock>
        <Fit w={218} size={98} color="#089908" weight={500} gap={5}>14.16</Fit>
        <Changes>
          <Fit w={98} size={41} color="#189018">−0.09</Fit>
          <Fit w={130} size={41} color="#189018" gap={27}>−0.63%</Fit>
        </Changes>
      </PriceBlock>
      <QuoteCol w={260}>
        <QuoteRow><Label>高</Label><Fit w={107} size={47.5} color="#dc3636">14.40</Fit></QuoteRow>
        <QuoteRow><Label>低</Label><Fit w={107} size={47.5} color="#119011">14.12</Fit></QuoteRow>
        <QuoteRow><Label>开</Label><Fit w={107} size={47.5} color="#119011">14.20</Fit></QuoteRow>
      </QuoteCol>
      <QuoteCol w={260} gap={39}>
        <QuoteRow><Label>市值</Label><Fit w={158} size={47.5}>41.33亿</Fit></QuoteRow>
        <QuoteRow><Label>流通</Label><Fit w={158} size={47.5}>41.08亿</Fit></QuoteRow>
        <QuoteRow><Label>市盈<Ttm>TTM</Ttm></Label><Fit w={105} size={47.5}>23.93</Fit></QuoteRow>
      </QuoteCol>
      <QuoteCol w={260} gap={39}>
        <QuoteRow><Label>量比</Label><Fit w={85} size={47.5} color="#119011">0.82</Fit></QuoteRow>
        <QuoteRow><Label>换</Label><Fit w={119} size={47.5}>1.64%</Fit></QuoteRow>
        <QuoteRow><Label>额</Label><Fit w={184} size={47.5}>6773.8万</Fit></QuoteRow>
      </QuoteCol>
      <Corner width="19" height="20" viewBox="0 0 19 20">
        <path d="M19 0v20H0z" fill="#c9c9c9" />
      </Corner>
    </Quote>

    <AfterRow>
      <Fit w={310} size={38.7} shift={2}>盘后固定价格交易</Fit>
      <Fit w={85} size={38.5} gap={18} shift={2} color="#119011">14.16</Fit>
      <Fit w={37} size={37} gap={27} shift={2} color="#666">量</Fit>
      <Fit w={20} size={38.5} gap={15} shift={2} color="#777">0</Fit>
      <Fit w={77} size={38.5} gap={40} shift={2} color="#d04040">买一</Fit>
      <Fit w={44} size={48} gap={15} color="#d04040">--</Fit>
      <Fit w={77} size={38.5} gap={41} shift={2} color="#119011">卖一</Fit>
      <Fit w={44} size={48} gap={15} color="#119011">--</Fit>
      <Icon gap={146} width="38" height="22" viewBox="0 0 38 22">
        <path d="M1 1l18 19L37 1" fill="none" stroke="#c8c8c8" strokeWidth="2.8" />
      </Icon>
    </AfterRow>

    <Band />

    <PeriodTabs>
      <Tab w={90} gap={40}>分时</Tab>
      <Tab w={76} gap={82}>日K</Tab>
      <Tab w={80} gap={76} active>周K</Tab>
      <Tab w={76} gap={81}>月K</Tab>
      <Tab w={90} gap={76}>五日</Tab>
      <Tab w={90} gap={85}>更多</Tab>
      <Caret gap={9} w={24} h={20} color="#aaa" />
      <Icon gap={93} width="54" height="52" viewBox="0 0 54 52">
        <path d="M16 2h22q3 0 4 2l9.5 19q1.5 3 0 6L42 48q-1 2-4 2H16q-3 0-4-2L2.500 29q-1.5-3 0-6L12 4q1-2 4-2z" fill="none" stroke="#999" strokeWidth="4" />
        <circle cx="27" cy="26" r="8.5" fill="none" stroke="#999" strokeWidth="4" />
      </Icon>
    </PeriodTabs>

    <MaLegend>
      <Chip w={125} h={55} pad={10}>
        <Fit w={70} size={35} shift={4}>均线</Fit>
        <Caret gap={12} />
      </Chip>
      <Fit w={71} size={35.5} gap={16} shift={4}>周线</Fit>
      <Fit w={141} size={36} gap={26} shift={4} color="#111">M5:13.75</Fit>
      <Fit w={159} size={36} gap={28} shift={4} color="#dfa01c">M10:13.54</Fit>
      <Fit w={159} size={36} gap={27} shift={4} color="#e8627a">M20:14.07</Fit>
      <Fit w={159} size={36} gap={27} shift={4} color="#6fc04e">M30:14.39</Fit>
      <Fit w={108} size={36} gap={75} shift={4}>前复权</Fit>
    </MaLegend>

    <Panel h={480}>
      <PriceChart />
      <Controls>
        <RoundButton>
          <svg width="40" height="40" viewBox="0 0 40 40">
            <path d="M21 1L3 19.5 21 38M38 1L20 19.5 38 38" fill="none" stroke="#5c5c5c" strokeWidth="4" />
          </svg>
        </RoundButton>
        <RoundButton>
          <svg width="38" height="38" viewBox="0 0 38 38">
            <path d="M0 19h38M19 0v38" stroke="#5c5c5c" strokeWidth="4" />
          </svg>
        </RoundButton>
        <RoundButton>
          <svg width="38" height="38" viewBox="0 0 38 38">
            <path d="M0 19h38" stroke="#5c5c5c" strokeWidth="4" />
          </svg>
        </RoundButton>
        <RoundButton>
          <svg width="26" height="40" viewBox="0 0 26 40">
            <path d="M22 2L4 20l18 18" fill="none" stroke="#5c5c5c" strokeWidth="4" />
          </svg>
        </RoundButton>
        <RoundButton>
          <svg width="20" height="40" viewBox="0 0 20 40">
            <path d="M0 2l18 18L0 38" fill="none" stroke="#5c5c5c" strokeWidth="4" />
          </svg>
        </RoundButton>
        <RoundButton>
          <svg width="40" height="40" viewBox="0 0 40 40">
            <path d="M2 19V2h17M38 21v17H21" fill="none" stroke="#5c5c5c" strokeWidth="4" />
          </svg>
        </RoundButton>
      </Controls>
    </Panel>

    <DateAxis>
      <DateTicks />
    </DateAxis>

    <Panel h={196} mb={13}>
      <VolumeChart />
      <LegendBlock>
        <LegendRow>
          <Chip w={176} pad={13}>
            <Fit w={117} size={39} shift={3}>成交额</Fit>
            <Caret gap={11} />
          </Chip>
          <Fit w={154} size={38.5} gap={14} shift={3} color="#d93a3a">额:3.27亿</Fit>
          <Fit w={168} size={38.5} gap={21} shift={3} color="#111">M5:3.03亿</Fit>
          <Fit w={190} size={38.5} gap={20} shift={3} color="#dfa01c">M10:2.69亿</Fit>
          <Fit w={127} size={39} gap={19} shift={3}>换手率:</Fit>
          <Fit w={98} size={38.5} shift={3} color="#4aa8e0">7.95%</Fit>
        </LegendRow>
      </LegendBlock>
    </Panel>

    <Indicator
      name="RSI(6,12,24)"
      nameW={204}
      chipW={267}
      values={[
        ["RSI6:+64.43", 17, 199, "#333"],
        ["RSI12:+52.02", 18, 219, "#e8794a"],
      ]}
      extra={["RSI24:+49.25", 217, "#c2457f"]}
      chart={<IndicatorChart lines={RSI_LINES} top={1620} offset={1400} grid={1717} />}
    />
    <Indicator
      name="KDJ(9,3,3)"
      nameW={179}
      chipW={241}
      values={[
        ["K:+67.51", 19, 145, "#333"],
        ["D:+56.66", 20, 149, "#e8794a"],
        ["J:+89.20", 18, 141, "#c2457f"],
      ]}
      chart={<IndicatorChart lines={KDJ_LINES} top={1829} offset={1820} grid={1926.5} />}
    />
    <Indicator
      name="BOLL(20,2)"
      nameW={197}
      chipW={258}
      values={[
        ["MID:+14.07", 19, 191, "#4a8fdc"],
        ["UPPER:+15.76", 21, 246, "#c93c3c"],
      ]}
      extra={["LOWER:+12.39", 256, "#158a15"]}
      chart={<BollChart />}
      last
    />

    <Band />

    <InfoTabs>
      <Tab w={96} gap={3} size={47.5}>策略</Tab>
      <Tab w={96} gap={72} size={47.5}>新闻</Tab>
      <Tab w={108} gap={69} size={54} active barColor="#fa3c32">盘口</Tab>
      <Tab w={96} gap={68} size={47.5}>资金</Tab>
      <Tab w={96} gap={74} size={47.5}>社区</Tab>
      <Tab w={96} gap={74} size={47.5}>公告</Tab>
      <Tab w={142} gap={68} size={47.5}><FadeText>简况(F</FadeText></Tab>
    </InfoTabs>

    <Feed>
      <FeedTitle>短线精灵</FeedTitle>
      <Icon gap={28} width="38" height="60" viewBox="0 0 38 60">
        <path d="M1 23l18 11 18-11" fill="none" stroke="#c4c4c4" strokeWidth="2.6" />
      </Icon>
      <FeedText gap={330}>赛力斯</FeedText>
      <FeedText gap={35}>大笔买入</FeedText>
      <Dot size={26} gap={14} top={16} />
      <Icon gap={39} width="20" height="60" viewBox="0 0 20 60">
        <path d="M3 9l13 20L3 50" fill="none" stroke="#999" strokeWidth="3" />
      </Icon>
    </Feed>

    <BottomBar>
      <Sector>
        <svg width="29" height="16" viewBox="0 0 29 16">
          <path d="M14.5 0L29 16H0z" fill="#aaa" />
        </svg>
        <Fit w={191} size={38} shift={20} weight={400} color="#7d868c">电子化学品</Fit>
        <Fit w={106} size={39.5} shift={23} weight={400} color="#e01414">0.13%</Fit>
      </Sector>
      <BarItem w={222}>
        <svg {...barIcon} viewBox="343 2556 70 62">
          <path d="M358 2560.5h39q6 0 6 6V2605l-11 12h-34q-6 0-6-6v-44.5q0-6 6-6z" />
          <path d="M360 2575h36M360 2583h36M360 2590.5h36M360 2598h25" />
        </svg>
        下单
      </BarItem>
      <BarItem w={224}>
        <svg {...barIcon} viewBox="566 2556 70 62">
          <rect x="571" y="2570" width="60" height="44" rx="6" />
          <path d="M589 2564h25M601 2582v21M590.5 2592h21" />
          <path d="M579 2616.5h12M610 2616.5h12" strokeWidth="4" />
        </svg>
        诊股
      </BarItem>
      <BarItem w={223}>
        <svg {...barIcon} viewBox="789 2556 70 62">
          <rect x="797.8" y="2563.3" width="51" height="50" />
          <path d="M823.5 2574v28M809.5 2588.5h28" />
        </svg>
        加自选
      </BarItem>
      <BarItem w={224}>
        <svg {...barIcon} viewBox="1013 2556 70 62">
          <circle cx="1048" cy="2589" r="26.5" />
          <path d="M1036 2581.5h24M1036 2597h24" />
        </svg>
        功能
        <Badge />
      </BarItem>
    </BottomBar>
  </Page>
);

export default App;
